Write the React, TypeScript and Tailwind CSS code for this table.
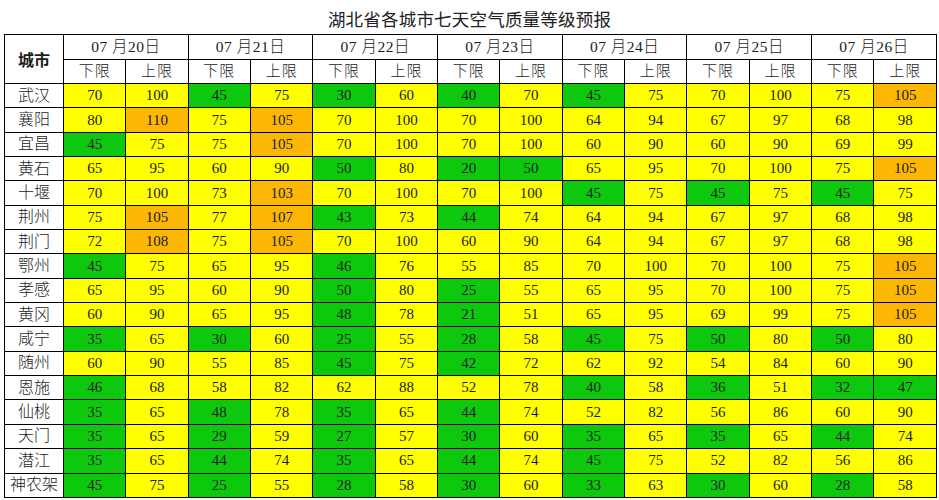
import React from 'react';

const dates = ['20', '21', '22', '23', '24', '25', '26'];

const rows: [string, number[]][] = [
  ['武汉', [70, 100, 45, 75, 30, 60, 40, 70, 45, 75, 70, 100, 75, 105]],
  ['襄阳', [80, 110, 75, 105, 70, 100, 70, 100, 64, 94, 67, 97, 68, 98]],
  ['宜昌', [45, 75, 75, 105, 70, 100, 70, 100, 60, 90, 60, 90, 69, 99]],
  ['黄石', [65, 95, 60, 90, 50, 80, 20, 50, 65, 95, 70, 100, 75, 105]],
  ['十堰', [70, 100, 73, 103, 70, 100, 70, 100, 45, 75, 45, 75, 45, 75]],
  ['荆州', [75, 105, 77, 107, 43, 73, 44, 74, 64, 94, 67, 97, 68, 98]],
  ['荆门', [72, 108, 75, 105, 70, 100, 60, 90, 64, 94, 67, 97, 68, 98]],
  ['鄂州', [45, 75, 65, 95, 46, 76, 55, 85, 70, 100, 70, 100, 75, 105]],
  ['孝感', [65, 95, 60, 90, 50, 80, 25, 55, 65, 95, 70, 100, 75, 105]],
  ['黄冈', [60, 90, 65, 95, 48, 78, 21, 51, 65, 95, 69, 99, 75, 105]],
  ['咸宁', [35, 65, 30, 60, 25, 55, 28, 58, 45, 75, 50, 80, 50, 80]],
  ['随州', [60, 90, 55, 85, 45, 75, 42, 72, 62, 92, 54, 84, 60, 90]],
  ['恩施', [46, 68, 58, 82, 62, 88, 52, 78, 40, 58, 36, 51, 32, 47]],
  ['仙桃', [35, 65, 48, 78, 35, 65, 44, 74, 52, 82, 56, 86, 60, 90]],
  ['天门', [35, 65, 29, 59, 27, 57, 30, 60, 35, 65, 35, 65, 44, 74]],
  ['潜江', [35, 65, 44, 74, 35, 65, 44, 74, 45, 75, 52, 82, 56, 86]],
  ['神农架', [45, 75, 25, 55, 28, 58, 30, 60, 33, 63, 30, 60, 28, 58]],
];

// 空气质量等级配色：≤50 优，51-100 良，>100 轻度污染
const levelColor = (v: number) => {
  if (v <= 50) return 'bg-[#0ec80e]';
  if (v <= 100) return 'bg-[#ffff00]';
  return 'bg-[#fbb703]';
};

const font = { fontFamily: '"Liberation Serif", "Noto Sans CJK SC", serif' };
const cjk = { fontFamily: '"Noto Sans CJK SC", sans-serif' };

export default function App() {
  return (
    <div className="w-[939px] h-[500px] bg-white text-[#1c1c1c] overflow-hidden" style={font}>
      <div className="h-[34px] flex items-center justify-center pt-[4px]">
        <h1 className="text-[17.5px] font-normal tracking-[0.2px] text-[#222]" style={cjk}>
          湖北省各城市七天空气质量等级预报
        </h1>
      </div>
      <table className="ml-[4px] w-[933px] table-fixed border-collapse border border-black text-center">
        <colgroup>
          <col className="w-[59px]" />
          {Array.from({ length: 14 }).map((_, i) => (
            <col key={i} />
          ))}
        </colgroup>
        <thead>
          <tr className="h-[25px]">
            <th rowSpan={2} className="border border-black font-bold text-[16px]" style={cjk}>
              城市
            </th>
            {dates.map((d) => (
              <th key={d} colSpan={2} className="border border-black font-light text-[15.5px] tracking-[0.5px]">
                07 月{d}日
              </th>
            ))}
          </tr>
          <tr className="h-[24px]">
            {dates.map((d) => (
              <React.Fragment key={d}>
                <th className="border border-black font-light text-[15px] tracking-[1px]">下限</th>
                <th className="border border-black font-light text-[15px] tracking-[1px]">上限</th>
              </React.Fragment>
            ))}
          </tr>
        </thead>
        <tbody>
          {rows.map(([city, values]) => (
            <tr key={city} className="h-[24.35px]">
              <td className="border border-black text-[16px] font-light leading-none">{city}</td>
              {values.map((v, i) => (
                <td key={i} className={`border border-black text-[15px] leading-none ${levelColor(v)}`}>
                  {v}
                </td>
              ))}
            </tr>
          ))}
        </tbody>
      </table>
    </div>
  );
}
